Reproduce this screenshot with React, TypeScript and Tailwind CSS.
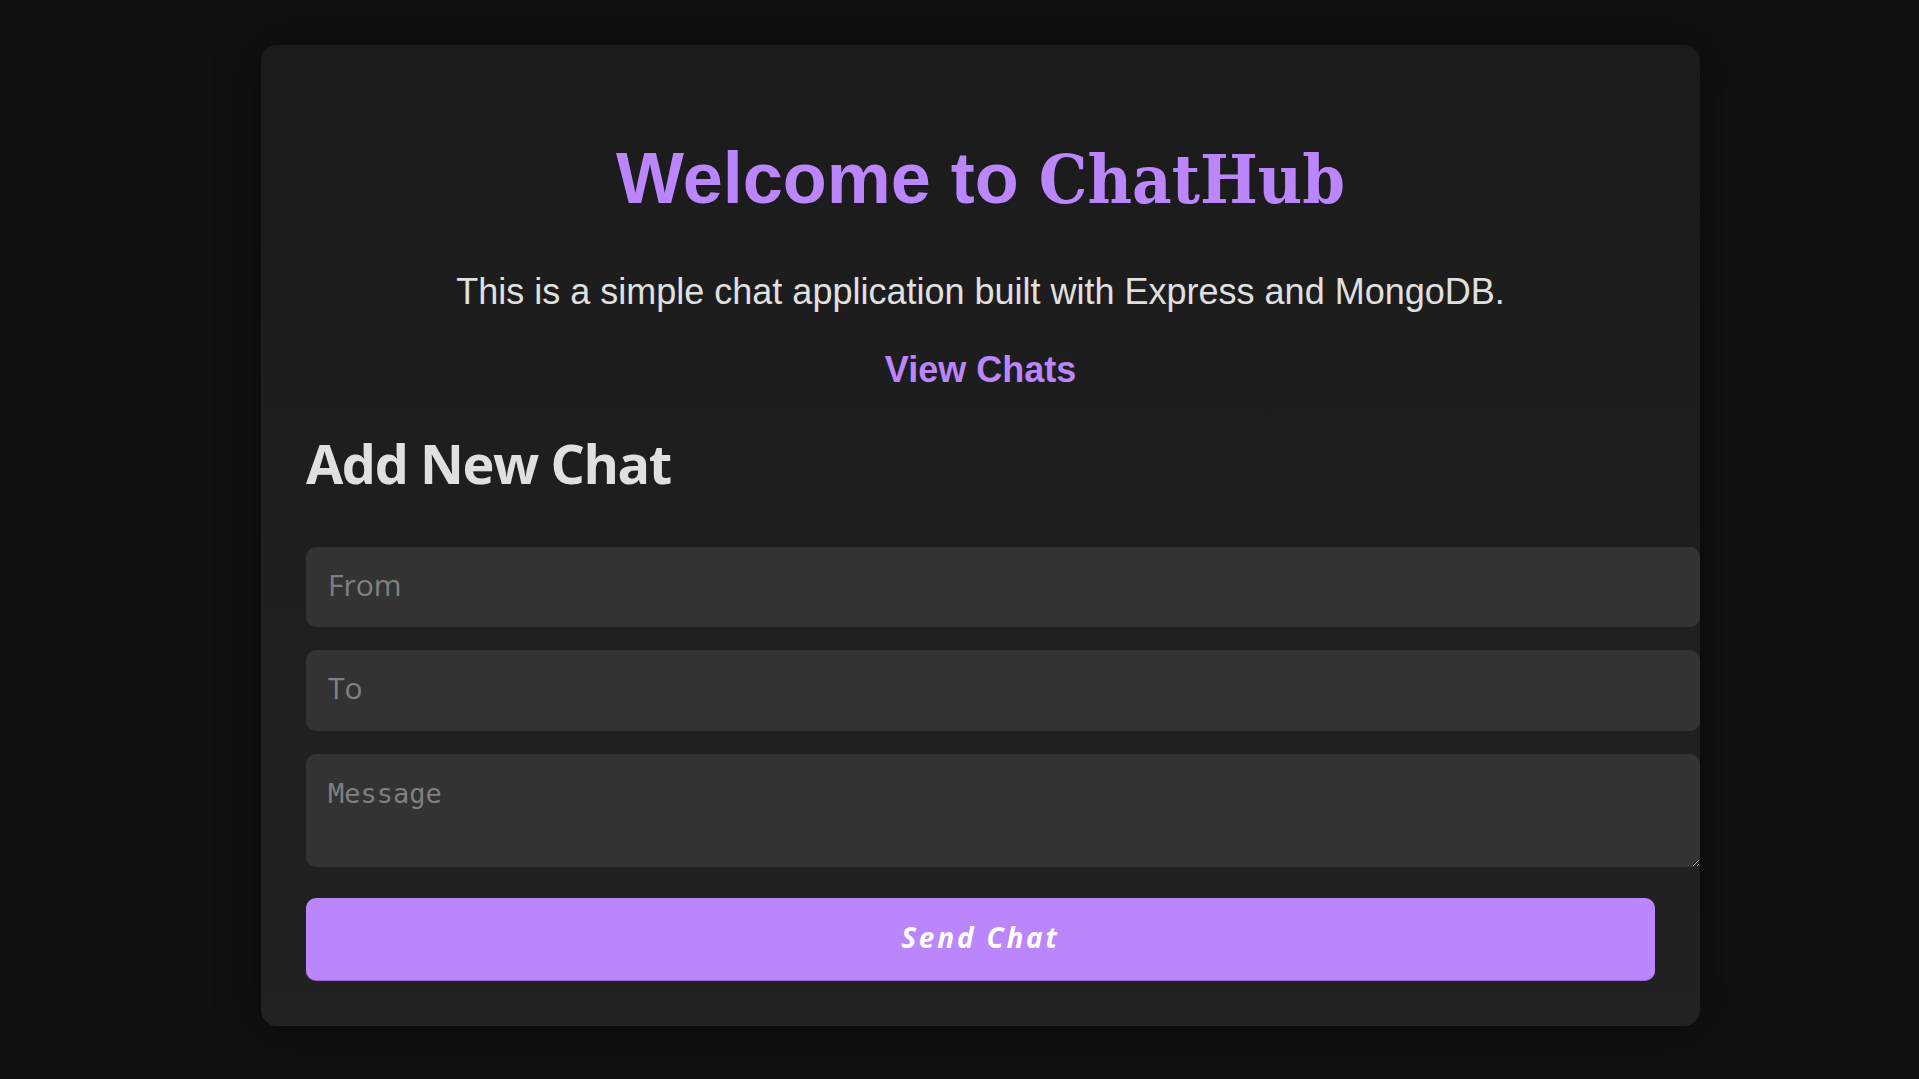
import React from "react";

export default function App() {
  return (
    <div className="min-h-[1079px] w-full bg-[#111111] pt-[45px] pl-[261px] font-['Liberation_Sans',Arial,sans-serif]">
      <div className="w-[1439px] h-[981px] rounded-[16px] bg-gradient-to-b from-[#1b1b1b] to-[#222222] shadow-[0_0_40px_rgba(0,0,0,0.55)] px-[45px] pt-[93px] pb-[45px] flex flex-col">
        <h1 className="m-0 text-center text-[72px] font-bold leading-[80px] text-[#bb86fc] whitespace-nowrap">
          Welcome to{" "}
          <span className="leading-[0] text-[68px] font-['DejaVu_Serif_Condensed','DejaVu_Serif',serif] font-stretch-condensed">ChatHub</span>
        </h1>
        <p className="mt-[53px] text-center text-[36px] leading-[41px] text-[#e0e0e0]">
          This is a simple chat application built with Express and MongoDB.
        </p>
        <div className="mt-[37px] text-center">
          <a href="#" className="text-[36px] leading-[41px] font-bold text-[#bb86fc]">View Chats</a>
        </div>
        <h2 className="mt-[43px] text-[54px] leading-[60px] font-bold tracking-[-1.4px] text-[#e0e0e0] font-['Open_Sans',sans-serif]">
          Add New Chat
        </h2>
        <form className="mt-[54px] flex flex-col" onSubmit={(e) => e.preventDefault()}>
          <input
            type="text"
            placeholder="From"
            className="w-[calc(100%+45px)] h-[80px] rounded-[10px] bg-[#333333] px-[22px] pb-[6px] text-[30px] text-[#e0e0e0] placeholder:text-[#808080] outline-none font-['Open_Sans',sans-serif]"
          />
          <input
            type="text"
            placeholder="To"
            className="mt-[23px] w-[calc(100%+45px)] h-[81px] rounded-[10px] bg-[#333333] px-[22px] pb-[6px] text-[30px] text-[#e0e0e0] placeholder:text-[#808080] outline-none font-['Open_Sans',sans-serif]"
          />
          <textarea
            placeholder="Message"
            className="mt-[23px] block w-[calc(100%+45px)] h-[113px] rounded-[10px] bg-[#333333] px-[22px] pt-[20px] text-[27px] text-[#e0e0e0] placeholder:text-[#808080] outline-none [color-scheme:dark] font-['DejaVu_Sans_Mono',monospace]"
          />
          <button
            type="submit"
            className="mt-[31px] w-full h-[82px] rounded-[10px] bg-[#bb86fc] pb-[4px] text-white text-[28px] font-bold italic tracking-[2.8px] shadow-[0_1px_0_#9a68d8] font-['Open_Sans',sans-serif]"
          >
            Send Chat
          </button>
        </form>
      </div>
    </div>
  );
}
